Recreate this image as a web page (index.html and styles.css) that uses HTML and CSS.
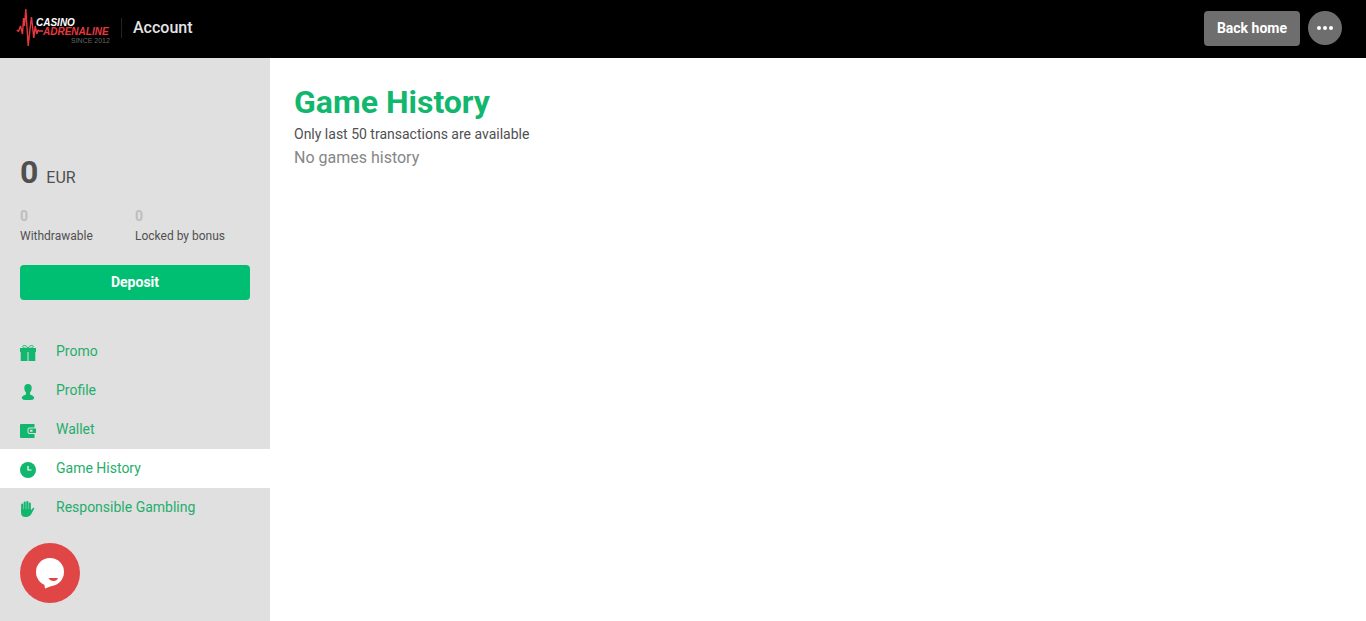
FILE: index.html
```html
<!DOCTYPE html>
<html lang="en">
<head>
<meta charset="utf-8">
<meta name="viewport" content="width=device-width, initial-scale=1">
<title>Game History</title>
<link rel="stylesheet" href="styles.css">
</head>
<body>
<header class="topbar">
  <a class="logo" href="#" aria-label="Casino Adrenaline">
    <svg width="94" height="40" viewBox="0 0 94 40">
      <path class="pulse" d="M1 22l1.500 1.500L4.500 18l2 8L7.500 10l1 8L9.800 1l2.400 37 1.800-17L15.500 9l2.300 21 1.400-12 1.600 8 1.200-4 1 1h4"/>
      <text class="logo-top" x="20" y="18">CASINO</text>
      <text class="logo-main" x="27" y="27">ADRENALINE</text>
      <text class="logo-since" x="55" y="35">SINCE 2012</text>
    </svg>
  </a>
  <span class="section">Account</span>
  <div class="actions">
    <button class="back" type="button">Back home</button>
    <button class="more" type="button" aria-label="More">
      <svg width="16" height="4" viewBox="0 0 16 4"><circle cx="2" cy="2" r="2"/><circle cx="8" cy="2" r="2"/><circle cx="14" cy="2" r="2"/></svg>
    </button>
  </div>
</header>
<div class="layout">
  <aside class="sidebar">
    <section class="account">
      <p class="balance"><strong>0</strong><span>EUR</span></p>
      <dl class="funds">
        <div><dd>0</dd><dt>Withdrawable</dt></div>
        <div><dd>0</dd><dt>Locked by bonus</dt></div>
      </dl>
      <button class="deposit" type="button">Deposit</button>
    </section>
    <nav class="menu">
      <a href="#">
        <svg viewBox="0 0 16 16"><path d="M0 3h16v4H0zM.7 7h6.800v9H.7zM8.500 7h6.800v9H8.500z"/><path class="bow" d="M8 3C6.500 .5 3.500-.4 2.800 1.300 2.400 2.500 4 3.300 8 3.300s5.600-.8 5.200-2C12.500-.4 9.500.5 8 3z"/></svg>
        <span>Promo</span></a>
      <a href="#">
        <svg viewBox="0 0 16 16"><path d="M8 0c2.700 0 3.900 1.700 3.700 4.200-.1 1.700-.8 3.300-1.700 4.300v1.800c.7 1 4.200 1.300 4.200 3.900 0 1.300-2.500 1.800-6.200 1.800s-6.200-.5-6.200-1.800c0-2.600 3.500-2.900 4.200-3.900V8.500C5.100 7.500 4.400 5.900 4.300 4.200 4.100 1.700 5.300 0 8 0z"/></svg>
        <span>Profile</span></a>
      <a href="#">
        <svg viewBox="0 0 16 16"><path d="M1 1h13.500v3.500H9.500Q7.500 4.500 7.500 6.500v2.500q0 2 2 2h5V15H1Q0 15 0 14V2Q0 1 1 1z"/><path fill-rule="evenodd" d="M9.500 5.500H16v4.500H9.500q-1 0-1-1V6.500q0-1 1-1zM10 6.700v2h2.500v-2z"/></svg>
        <span>Wallet</span></a>
      <a class="active" href="#" aria-current="page">
        <svg viewBox="0 0 16 16"><circle cx="8" cy="8" r="8"/><path class="hands" d="M8 4v4h3.500"/></svg>
        <span>Game History</span></a>
      <a href="#">
        <svg viewBox="0 0 16 16"><path class="fingers" d="M2.200 3.500v7M4.700 1.500v8M7.300 1v8M9.800 2.500v8"/><path d="M1.100 8h9.800v1.300c1-.7 1.700-2.600 2.700-2.600.7 0 .8.700.4 1.400l-2.800 5.200Q9.700 16 7 16H5.500q-4.400 0-4.400-4z"/></svg>
        <span>Responsible Gambling</span></a>
    </nav>
    <button class="chat" type="button" aria-label="Open chat">
      <svg width="30" height="32" viewBox="0 0 30 32"><g class="bubble"><circle cx="15" cy="15" r="14"/><path d="M9 25l1 6.500L22 27z"/></g><path class="smile" d="M13.500 21h9.500q-1 3-4.500 3t-5-3z"/></svg>
    </button>
  </aside>
  <main class="content">
    <h1>Game History</h1>
    <p class="note">Only last 50 transactions are available</p>
    <p class="empty">No games history</p>
  </main>
</div>
</body>
</html>
```
FILE: styles.css
```css
* { box-sizing: border-box; }
body {
  margin: 0;
  min-height: 100vh;
  display: flex;
  flex-direction: column;
  font: 14px/20px Roboto, "Liberation Sans", sans-serif;
  color: #505050;
  background: #fff;
}
p, h1, dl, dd { margin: 0; }
button { border: 0; padding: 0; font: inherit; cursor: pointer; }
a { text-decoration: none; }

.topbar {
  display: flex;
  align-items: center;
  padding: 7px 24px 9px 16px;
  min-height: 58px;
  background: #000;
}
.logo { display: flex; }
.logo svg { overflow: visible; }
.pulse { fill: none; stroke: #e8383f; stroke-width: 1.4; stroke-linejoin: bevel; }
.logo text { font-family: "Liberation Sans", Arial, sans-serif; }
.logo .logo-top { font-size: 10px; font-weight: bold; font-style: italic; fill: #fff; }
.logo .logo-main { font-size: 10px; font-weight: bold; font-style: italic; fill: #e8383f; }
.logo .logo-since { font-size: 7px; fill: #666; }
.section {
  margin-left: 11px;
  padding-left: 11px;
  border-left: 1px solid #222;
  font-size: 16px;
  font-weight: 500;
  color: #e4e4e4;
}
.actions { display: flex; align-items: center; gap: 8px; margin-left: auto; }
.back {
  height: 35px;
  padding: 0 13px;
  border-radius: 4px;
  background: #6e6e6e;
  color: #fff;
  font-weight: 700;
}
.more {
  display: grid;
  place-items: center;
  width: 34px;
  height: 34px;
  border-radius: 50%;
  background: #6e6e6e;
}
.more svg { fill: #fff; }

.layout { flex: 1; display: flex; }
.sidebar { flex: 0 0 270px; background: #e0e0e0; }
.account { padding: 94px 20px 32px; }
.balance { display: flex; align-items: baseline; gap: 8px; line-height: 40px; }
.balance strong { font-size: 32px; }
.balance span { font-size: 16px; }
.funds { display: grid; grid-template-columns: 1fr 1fr; margin: 8px 0 19px; }
.funds div { display: flex; flex-direction: column; }
.funds dd { font-weight: 700; color: #bdbdbd; }
.funds dt { font-size: 12px; }
.deposit {
  width: 100%;
  height: 35px;
  padding-bottom: 1px;
  border-radius: 4px;
  background: #00bf73;
  color: #fff;
  font-weight: 700;
}
.menu a {
  display: flex;
  align-items: flex-start;
  gap: 20px;
  padding: 9px 20px 10px;
  color: #1fae6c;
}
.menu svg { width: 16px; height: 16px; margin-top: 4px; fill: #12b76e; }
.menu .active { background: #fff; }
.menu .bow { fill: none; stroke: #12b76e; stroke-width: 1; }
.menu .hands { fill: none; stroke: #fff; stroke-width: 1.2; }
.menu .fingers { fill: none; stroke: #12b76e; stroke-width: 2.1; stroke-linecap: round; }

.chat {
  display: grid;
  place-items: center;
  width: 60px;
  height: 60px;
  margin: 16px 20px 18px;
  border-radius: 50%;
  background: #e04646;
}
.chat .bubble { fill: #fff; }
.chat .smile { fill: #e04646; }

.content { flex: 1; padding: 24px; }
h1 { font-size: 32px; line-height: 40px; font-weight: 700; color: #12b76e; }
.note { line-height: 24px; }
.empty { font-size: 16px; line-height: 24px; color: #868686; }
```
